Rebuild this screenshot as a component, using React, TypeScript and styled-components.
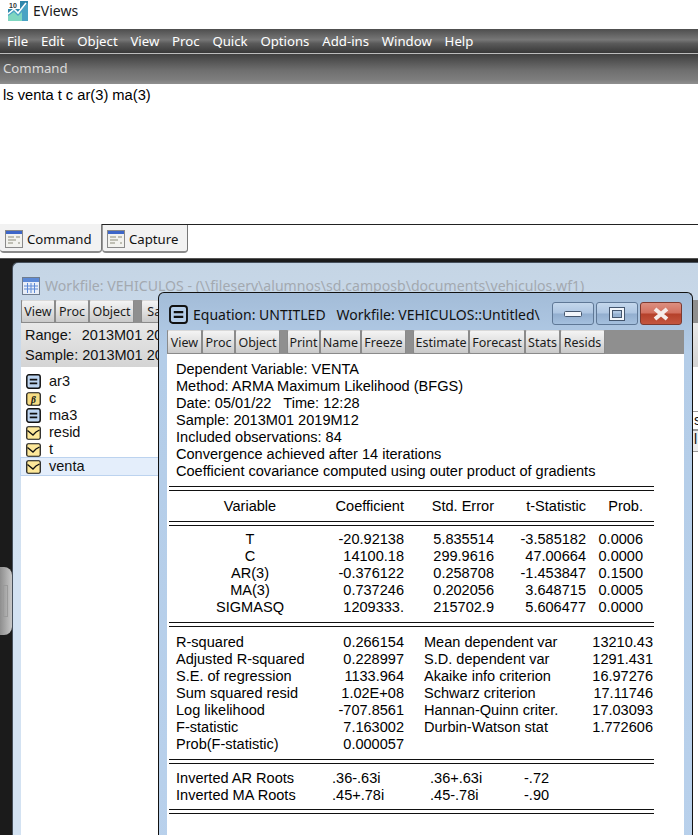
import React from "react";
import styled, { createGlobalStyle } from "styled-components";

const Global = createGlobalStyle`
  html, body { margin: 0; padding: 0; background: #fff; }
  * { box-sizing: border-box; }
`;

const ui = `"Noto Sans", "Open Sans", sans-serif`;
const arial = `"Liberation Sans", Arial, sans-serif`;

const Page = styled.div`
  width: 698px; height: 835px; overflow: hidden; display: flex; flex-direction: column;
  background: #fff; font-family: ${ui}; color: #111;
`;
const TitleBar = styled.div`
  height: 29px; display: flex; align-items: center; gap: 5px; padding: 0 0 8px 8px; font-size: 14px; color: #1a1a1a;
`;
const MenuBar = styled.div`
  height: 25px; display: flex; align-items: center; padding-left: 7px; gap: 12.8px; font-size: 13.2px; color: #fff;
  background: linear-gradient(#4e4e4e, #777 45%, #5a5a5a 60%, #383838);
  border-bottom: 1px solid #bcbcbc;
`;
const MenuItem = styled.span``;
const CommandBar = styled.div`
  height: 30px; display: flex; align-items: center; padding: 0 0 2px 3px; font-size: 13.2px; color: #d9d9d9;
  background: linear-gradient(#3f3f3f, #6f6f6f 55%, #7d7d7d 85%, #8f8f8f);
`;
const CommandArea = styled.div`
  height: 140px; padding: 3px 0 0 3px; font: 14.7px/17px ${arial}; color: #000;
`;
const TabStrip = styled.div`
  height: 29px; display: flex; align-items: stretch; border-top: 1px solid #222; position: relative;
`;
const Tab = styled.div<{ $w: number; $active?: boolean }>`
  width: ${p => p.$w}px; display: flex; align-items: center; gap: 4px;
  padding: ${p => (p.$active ? "2px 0 0 5px" : "1px 0 0 4px")};
  font-size: 13.2px; color: #111; background: #f2f2f2;
  border-right: 1px solid #777; border-bottom: 2px solid #8a8a8a; border-radius: 0 0 4px 4px;
  margin-top: ${p => (p.$active ? -1 : 0)}px; border-left: ${p => (p.$active ? "0" : "1px solid #999")};
`;
const Spacer = styled.div` height: 5px; `;
const Desktop = styled.div`
  flex: 1; position: relative; background: #1b1b1b; overflow: hidden; border-top: 1px solid #555;
`;
const Handle = styled.div`
  position: absolute; left: 0; top: 308px; width: 12px; height: 68px; background: linear-gradient(90deg, #8e8e8e, #c8c8c8);
  border-radius: 0 8px 8px 0;
  &::after { content: ""; position: absolute; left: 3px; top: 18px; width: 3px; height: 30px; border: 1px solid #9a9a9a; }
`;
const WorkfileWindow = styled.div`
  position: absolute; left: 12px; top: 3px; width: 700px; height: 600px; padding: 0 0 0 8px;
  background: linear-gradient(#c5d5e5, #c9d9ea 60px, #d3e2f2 300px);
  border-radius: 6px 0 0 0; border: 1px solid #46505c; border-width: 1px 0 0 1px; display: flex; flex-direction: column;
`;
const WfTitle = styled.div`
  height: 37px; display: flex; align-items: center; gap: 5px; padding: 8px 0 0 1px; font-size: 14.1px; color: #a3a9b0; white-space: nowrap;
`;
const Toolbar = styled.div<{ $h: number }>`
  height: ${p => p.$h}px; display: flex; align-items: stretch; background: #8f8f8f; flex: none;
`;
const ToolBtn = styled.div<{ $w: number; $gap?: boolean }>`
  width: ${p => p.$w}px; margin-left: ${p => (p.$gap ? 7 : 0)}px; display: flex; align-items: center; justify-content: center;
  font-size: 12.5px; color: #1c1c1c; white-space: nowrap; overflow: hidden;
  background: linear-gradient(#f4f4f4, #e0e0e0 50%, #c9c9c9);
  border: 1px solid #8a8a8a; border-top-color: #d8d8d8; border-radius: 2px;
`;
const RangePanel = styled.div`
  height: 44px; background: linear-gradient(#e8e8e8, #d4d4d4); padding: 2px 0 0 4px; font: 14.5px/20px ${arial}; color: #111; flex: none;
`;
const RangeRow = styled.div`
  display: flex; gap: 10px; white-space: nowrap;
`;
const ObjList = styled.div`
  flex: 1; background: #fff; padding: 6px 0 0 0; font: 14.5px/17px ${arial}; color: #111;
  position: relative;
`;
const ObjRow = styled.div<{ $sel?: boolean }>`
  height: 17px; display: flex; align-items: center; gap: 8px; padding-left: 5px; width: 145px;
  ${p => p.$sel && `background: #e4eefb; outline: 1px solid #bcd3ef;`}
`;
const RightPane = styled.div`
  position: absolute; left: 672px; top: 152px; width: 40px; font: 14px/17px ${arial}; color: #111;
  display: flex; flex-direction: column;
`;
const RightRow = styled.div<{ $h: number; $bg: string }>`
  height: ${p => p.$h}px; background: ${p => p.$bg}; padding-left: 22px;
  border-top: 1px solid #9a9a9a; border-bottom: 1px solid #9a9a9a; overflow: hidden;
`;
const EqWindow = styled.div`
  position: absolute; left: 158px; top: 33px; width: 535px; height: 600px; padding: 0 8px 0 8px;
  background: linear-gradient(#a3bcd8, #b4cde8 60px, #b9d1ec);
  border: 1px solid #111; border-bottom: 0; border-radius: 6px 6px 0 0; display: flex; flex-direction: column;
`;
const EqTitleBar = styled.div`
  height: 37px; display: flex; align-items: center; padding: 5px 0 0 2px; position: relative; font-size: 14px; color: #111; white-space: pre; flex: none;
`;
const EqTitleText = styled.span` margin-left: 5px; `;
const Controls = styled.div`
  position: absolute; right: 2px; top: 9px; display: flex; gap: 2px;
`;
const Ctl = styled.div<{ $red?: boolean }>`
  width: 42px; height: 23px; border-radius: 3px; display: flex; align-items: center; justify-content: center;
  border: 1px solid ${p => (p.$red ? "#7d3a30" : "#5f7896")};
  background: ${p => (p.$red
    ? "linear-gradient(#dc8f80, #d3705f 48%, #b5402a 52%, #c4563f)"
    : "linear-gradient(#c4d7ec, #aec6e2 48%, #92aecf 52%, #a5c0de)")};
`;
const Report = styled.div`
  flex: 1; background: #fff; padding: 7px 0 0 9px; font: 14.55px/17px ${arial}; color: #000; display: flex; flex-direction: column;
`;
const Line = styled.div` height: 17px; white-space: pre; `;
const Rule = styled.div<{ $mt: number; $mb: number }>`
  width: 485px; height: 5px; margin: ${p => p.$mt}px 0 ${p => p.$mb}px -7px; flex: none;
  border-top: 1.5px solid #111; border-bottom: 1.5px solid #111;
`;
const CoefRow = styled.div`
  display: grid; grid-template-columns: 148px 80px 90px 92px 57px; height: 17px; white-space: nowrap;
`;
const Center = styled.span` text-align: center; `;
const Right = styled.span` text-align: right; `;
const StatRow = styled.div`
  display: grid; grid-template-columns: 148px 80px 20px 160px 69px; height: 17px; white-space: nowrap;
`;
const RootRow = styled.div`
  display: grid; grid-template-columns: 156px 98px 94px 60px; height: 17px; white-space: nowrap;
`;

const LogoIcon = () => (
  <svg width="20" height="20" viewBox="0 0 20 20">
    <rect width="20" height="20" fill="#2f86ab" />
    <polygon points="0,20 0,12 6,8 10,12 20,2 20,20" fill="#4aa3c4" />
    <polygon points="0,20 0,15 6,11 10,15 14,11 14,20" fill="#7fd6c0" />
    <rect x="0" y="0" width="12" height="8" fill="#fff" />
    <polyline points="0,13 6,8 10,12 18,2" fill="none" stroke="#fff" strokeWidth="1.6" />
    <text x="1" y="7" fontSize="7" fontFamily="Liberation Sans" fontWeight="700" fill="#333">10</text>
  </svg>
);
const SheetIcon = () => (
  <svg width="18" height="18" viewBox="0 0 18 18">
    <rect x=".5" y=".5" width="17" height="17" fill="#f2f2ee" stroke="#8a8a8a" />
    <rect x="1" y="1" width="16" height="3" fill="#3d66c8" />
    <path d="M3 7h6M3 10h8M3 13h5M11 7h4M13 13h2" stroke="#8b8b7a" strokeWidth="1.2" />
  </svg>
);
const TableIcon = () => (
  <svg width="18" height="18" viewBox="0 0 18 18">
    <rect x=".5" y=".5" width="17" height="17" fill="#e8eef8" stroke="#6f7d8f" />
    <rect x="1" y="1" width="16" height="4" fill="#5d8ad6" />
    <path d="M5.5 6v10M9 6v10M12.5 6v10M2 9h14M2 12h14" stroke="#5d8ad6" strokeWidth="1" />
  </svg>
);
const EqIcon = ({ size = 14, fill = "#bcd4f0" }: { size?: number; fill?: string }) => (
  <svg width={size} height={size} viewBox="0 0 14 14">
    <rect x=".75" y=".75" width="12.5" height="12.5" rx="2" fill={fill} stroke="#111" strokeWidth="1.4" />
    <path d="M3.5 5.2h7M3.5 8.8h7" stroke="#111" strokeWidth="1.7" />
  </svg>
);
const BetaIcon = () => (
  <svg width="15" height="14" viewBox="0 0 15 14">
    <rect x=".75" y=".75" width="13.5" height="12.5" rx="2" fill="#f6dd84" stroke="#111" strokeWidth="1.2" />
    <text x="7.5" y="10.5" textAnchor="middle" fontSize="9.5" fontStyle="italic" fontWeight="700" fontFamily="Liberation Serif" fill="#111">β</text>
  </svg>
);
const SeriesIcon = () => (
  <svg width="15" height="14" viewBox="0 0 15 14">
    <rect x=".75" y=".75" width="13.5" height="12.5" rx="1.5" fill="#fde89a" stroke="#111" strokeWidth="1.2" />
    <path d="M1.5 4.5 L7 9 L10 6 L13.5 4" fill="none" stroke="#111" strokeWidth="1.3" />
  </svg>
);

const menu = ["File", "Edit", "Object", "View", "Proc", "Quick", "Options", "Add-ins", "Window", "Help"];
const objects: [string, React.ReactNode][] = [
  ["ar3", <EqIcon size={15} />], ["c", <BetaIcon />], ["ma3", <EqIcon size={15} />],
  ["resid", <SeriesIcon />], ["t", <SeriesIcon />], ["venta", <SeriesIcon />],
];
const head = [
  "Dependent Variable: VENTA", "Method: ARMA Maximum Likelihood (BFGS)", "Date: 05/01/22   Time: 12:28",
  "Sample: 2013M01 2019M12", "Included observations: 84", "Convergence achieved after 14 iterations",
  "Coefficient covariance computed using outer product of gradients",
];
const coefs = [
  ["T", "-20.92138", "5.835514", "-3.585182", "0.0006"],
  ["C", "14100.18", "299.9616", "47.00664", "0.0000"],
  ["AR(3)", "-0.376122", "0.258708", "-1.453847", "0.1500"],
  ["MA(3)", "0.737246", "0.202056", "3.648715", "0.0005"],
  ["SIGMASQ", "1209333.", "215702.9", "5.606477", "0.0000"],
];
const stats = [
  ["R-squared", "0.266154", "Mean dependent var", "13210.43"],
  ["Adjusted R-squared", "0.228997", "S.D. dependent var", "1291.431"],
  ["S.E. of regression", "1133.964", "Akaike info criterion", "16.97276"],
  ["Sum squared resid", "1.02E+08", "Schwarz criterion", "17.11746"],
  ["Log likelihood", "-707.8561", "Hannan-Quinn criter.", "17.03093"],
  ["F-statistic", "7.163002", "Durbin-Watson stat", "1.772606"],
  ["Prob(F-statistic)", "0.000057", "", ""],
];
const eqTools: [string, number, boolean?][] = [
  ["View", 35], ["Proc", 33], ["Object", 45], ["Print", 33, true], ["Name", 41], ["Freeze", 45],
  ["Estimate", 56, true], ["Forecast", 56], ["Stats", 35], ["Resids", 45],
];

export default function App() {
  return (
    <Page>
      <Global />
      <TitleBar><LogoIcon /><span>EViews</span></TitleBar>
      <MenuBar>{menu.map(m => <MenuItem key={m}>{m}</MenuItem>)}</MenuBar>
      <CommandBar>Command</CommandBar>
      <CommandArea>ls venta t c ar(3) ma(3)</CommandArea>
      <TabStrip>
        <Tab $w={102} $active><SheetIcon />Command</Tab>
        <Tab $w={86}><SheetIcon />Capture</Tab>
      </TabStrip>
      <Spacer />
      <Desktop>
        <Handle />
        <WorkfileWindow>
          <WfTitle><TableIcon />{"Workfile: VEHICULOS - (\\\\fileserv\\alumnos\\sd.camposb\\documents\\vehiculos.wf1)"}</WfTitle>
          <Toolbar $h={23}>
            <ToolBtn $w={34}>View</ToolBtn>
            <ToolBtn $w={34}>Proc</ToolBtn>
            <ToolBtn $w={45}>Object</ToolBtn>
            <ToolBtn $w={40} $gap>Save</ToolBtn>
          </Toolbar>
          <RangePanel>
            <RangeRow><span>Range:</span><span>2013M01 2019M12</span></RangeRow>
            <RangeRow><span>Sample: 2013M01 2019M12</span></RangeRow>
          </RangePanel>
          <ObjList>
            {objects.map(([n, icon]) => (
              <ObjRow key={n} $sel={n === "venta"}>{icon}<span>{n}</span></ObjRow>
            ))}
          </ObjList>
        </WorkfileWindow>
        <RightPane>
          <RightRow $h={19} $bg="#ffffff">s</RightRow>
          <RightRow $h={22} $bg="#ececec">l</RightRow>
        </RightPane>
        <EqWindow>
          <EqTitleBar>
            <EqIcon size={19} fill="#b5cde8" />
            <EqTitleText>{"Equation: UNTITLED   Workfile: VEHICULOS::Untitled\\"}</EqTitleText>
            <Controls>
              <Ctl><svg width="18" height="6" viewBox="0 0 18 6"><rect x=".5" y=".5" width="17" height="5" rx="1" fill="#f2f6fb" stroke="#44566e" /></svg></Ctl>
              <Ctl><svg width="16" height="14" viewBox="0 0 16 14"><rect x="1.5" y="1.5" width="13" height="11" fill="none" stroke="#f2f6fb" strokeWidth="3" /><rect x=".5" y=".5" width="15" height="13" fill="none" stroke="#44566e" /><rect x="3.5" y="3.5" width="9" height="7" fill="none" stroke="#44566e" /></svg></Ctl>
              <Ctl $red><svg width="18" height="14" viewBox="0 0 18 14"><path d="M3 2 L15 12 M15 2 L3 12" stroke="#f5ecea" strokeWidth="4" /></svg></Ctl>
            </Controls>
          </EqTitleBar>
          <Toolbar $h={24}>
            {eqTools.map(([t, w, g]) => <ToolBtn key={t} $w={w} $gap={g}>{t}</ToolBtn>)}
          </Toolbar>
          <Report>
            {head.map(l => <Line key={l}>{l}</Line>)}
            <Rule $mt={6} $mb={7} />
            <CoefRow>
              <Center>Variable</Center><Right>Coefficient</Right><Right>Std. Error</Right><Right>t-Statistic</Right><Right>Prob.</Right>
            </CoefRow>
            <Rule $mt={6} $mb={5} />
            {coefs.map(r => (
              <CoefRow key={r[0]}>
                <Center>{r[0]}</Center><Right>{r[1]}</Right><Right>{r[2]}</Right><Right>{r[3]}</Right><Right>{r[4]}</Right>
              </CoefRow>
            ))}
            <Rule $mt={6} $mb={7} />
            {stats.map(r => (
              <StatRow key={r[0]}>
                <span>{r[0]}</span><Right>{r[1]}</Right><span /><span>{r[2]}</span><Right>{r[3]}</Right>
              </StatRow>
            ))}
            <Rule $mt={6} $mb={6} />
            <RootRow><span>Inverted AR Roots</span><span>.36-.63i</span><span>.36+.63i</span><span>-.72</span></RootRow>
            <RootRow><span>Inverted MA Roots</span><span>.45+.78i</span><span>.45-.78i</span><span>-.90</span></RootRow>
            <Rule $mt={5} $mb={0} />
          </Report>
        </EqWindow>
      </Desktop>
    </Page>
  );
}
